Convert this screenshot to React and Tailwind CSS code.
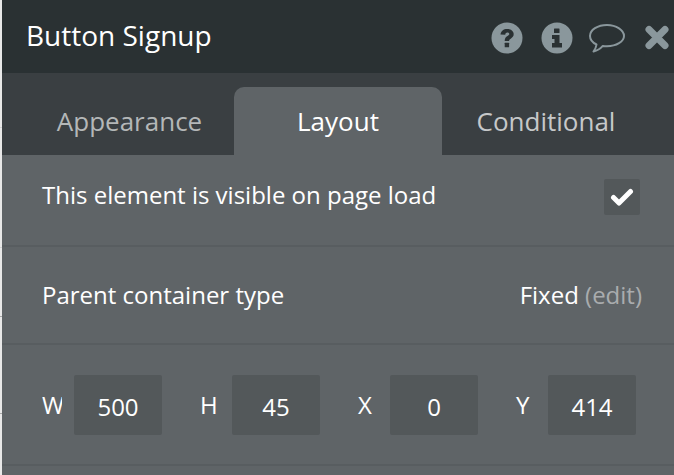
import React from "react";

const font = { fontFamily: '"Open Sans", sans-serif' };

function Field({ label, value, labelClass }) {
  return (
    <div className="flex items-center">
      <div className="w-[32px]">
        <div className={`${labelClass} whitespace-nowrap text-[24px] leading-[30px] text-white`}>{label}</div>
      </div>
      <div className="flex h-[60px] w-[88px] items-center justify-center rounded-[2px] bg-[#53585a] pt-[4px] text-[24px] text-white">{value}</div>
    </div>
  );
}

function QuestionIcon() {
  return (
    <svg width="32" height="32" viewBox="0 0 32 32">
      <circle cx="16" cy="16" r="15.500" fill="#8a979c" />
      <path d="M9.500 12.500c.4-3.600 3-5.600 6.600-5.600 3.800 0 6.600 2.200 6.600 5.200 0 2.500-1.400 3.600-3 4.600-1.100.7-1.600 1.200-1.600 2.400h-4.400c0-2.900 1.100-4.100 2.800-5.100 1.100-.7 1.800-1.200 1.800-2 0-1-.9-1.500-1.900-1.500-1.100 0-2 .8-2.200 2.300z" fill="#2a3133" />
      <rect x="13.700" y="20.800" width="4.400" height="4.400" rx=".5" fill="#2a3133" />
    </svg>
  );
}

function InfoIcon() {
  return (
    <svg width="32" height="32" viewBox="0 0 32 32">
      <circle cx="16" cy="16" r="15.500" fill="#8a979c" />
      <rect x="13" y="6.500" width="5.500" height="4.500" rx=".5" fill="#2a3133" />
      <path d="M11 13h7.500v8H21v4.500H11V21h2.500v-4H11z" fill="#2a3133" />
    </svg>
  );
}

function BubbleIcon() {
  return (
    <svg width="38" height="32" viewBox="0 0 38 32" fill="none">
      <path d="M20 2C10.600 2 3 6.900 3 13c0 3.600 2.500 6.600 6.500 8.500-.3 2.600-1.500 5-3 7 3.700-.8 7-3 9.300-5.600 1.300.2 2.800.3 4.200.3 9.400 0 17-4.600 17-10.200S29.400 2 20 2z" stroke="#8a979c" strokeWidth="2" strokeLinejoin="round" />
    </svg>
  );
}

function CloseIcon() {
  return (
    <svg width="24" height="25" viewBox="0 0 24 25">
      <path d="M4 4.500l16 16M20 4.500l-16 16" stroke="#8a979c" strokeWidth="7" strokeLinecap="round" />
    </svg>
  );
}

export default function App() {
  return (
    <div style={font} className="flex h-[475px] w-[674px] overflow-hidden bg-[#e8e8e8]">
      <div className="flex w-[2px] shrink-0 flex-col">
        <div className="mt-[127px] h-[1px] bg-[#d2d2d2]" />
        <div className="mt-[119px] h-[1px] bg-[#d2d2d2]" />
        <div className="mt-[68px] h-[1px] bg-[#a8a8a8]" />
        <div className="mt-[96px] h-[1px] bg-[#a8a8a8]" />
      </div>
      <div className="flex w-[672px] shrink-0 flex-col bg-[#5f6467]">
        <div className="flex h-[73px] items-center justify-between bg-[#2a3133] pl-[24px]">
          <span className="mb-[4px] text-[28px] leading-none text-white">Button Signup</span>
          <div className="flex w-[183px] shrink-0 items-center pt-[2px]">
            <QuestionIcon />
            <div className="ml-[18px]"><InfoIcon /></div>
            <div className="ml-[14px] mt-[3px]"><BubbleIcon /></div>
            <div className="ml-[20px]"><CloseIcon /></div>
          </div>
        </div>
        <div className="flex h-[82px] bg-[#3a3f42] pt-[14px]">
          <div className="flex w-[232px] items-center justify-center pl-[23px] text-[26px] leading-none text-[#b4b7b8]">Appearance</div>
          <div className="flex w-[208px] items-center justify-center rounded-t-[10px] bg-[#5f6467] text-[26px] leading-none text-white">Layout</div>
          <div className="flex w-[208px] items-center justify-center text-[26px] leading-none text-[#c6c8c9]">Conditional</div>
        </div>
        <div className="flex h-[92px] items-center justify-between border-b-2 border-[#585d60] pb-[6px] pl-[40px] pr-[34px]">
          <span className="mb-[4px] text-[24px] leading-none text-white">This element is visible on page load</span>
          <div className="flex h-[36px] w-[36px] items-center justify-center rounded-[2px] bg-[#53585a]">
            <svg width="24" height="20" viewBox="0 0 24 20">
              <path d="M3.500 10.500l5.500 5.500 11.500-11.500" fill="none" stroke="#fff" strokeWidth="5" strokeLinecap="round" strokeLinejoin="round" />
            </svg>
          </div>
        </div>
        <div className="flex h-[98px] items-center justify-between border-b-2 border-[#585d60] pl-[40px] pr-[32px]">
          <span className="text-[24px] leading-none text-white">Parent container type</span>
          <span className="text-[24px] leading-none text-white">Fixed <span className="text-[#a9acae]">(edit)</span></span>
        </div>
        <div className="flex h-[121px] items-center justify-between border-b-2 border-[#585d60] pl-[40px] pr-[38px]">
          <Field label="W" value="500" labelClass="w-[20px] overflow-hidden" />
          <Field label="H" value="45" labelClass="" />
          <Field label="X" value="0" labelClass="" />
          <Field label="Y" value="414" labelClass="" />
        </div>
      </div>
    </div>
  );
}
